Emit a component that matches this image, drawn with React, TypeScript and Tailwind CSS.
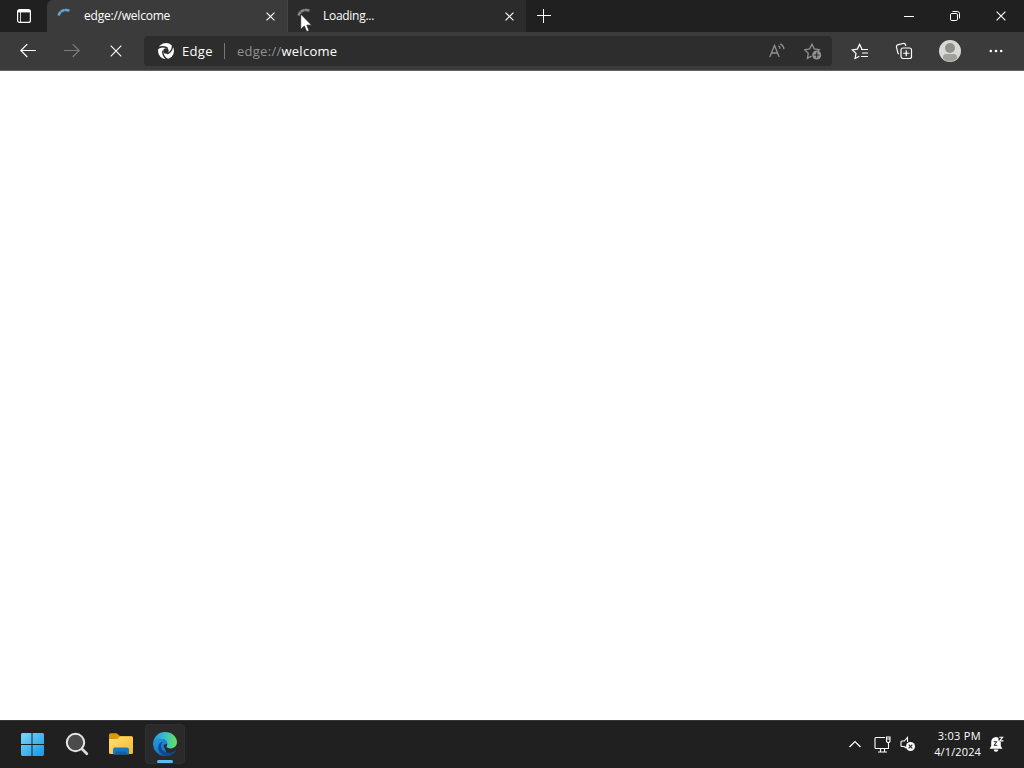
import type { ReactNode } from "react";
import clsx from "clsx";

function CloseIcon({ size = 9, width = 1.3 }: { size?: number; width?: number }) {
  return (
    <svg width={size} height={size} viewBox="0 0 10 10" fill="none" stroke="currentColor" strokeWidth={width}>
      <path d="M.6.6l8.8 8.8M9.4.6L.6 9.4" />
    </svg>
  );
}

function Spinner() {
  return (
    <svg width="16" height="16" viewBox="0 0 16 16" fill="none" stroke="currentColor" strokeWidth="2.6">
      <path d="M2.600 7.600C3.300 3.800 8 .4 13.700 2.700" strokeDasharray="4.200 .3" />
    </svg>
  );
}

function EdgeMark() {
  const cut = "M-.3 5.300C2.600 3.300 7.200 2.900 9.800 5.600";
  return (
    <svg width="16" height="16" viewBox="0 0 16 16">
      <circle cx="8" cy="8" r="8" fill="#fff" />
      <g fill="none" stroke="#2d2d2d" strokeWidth="1.400">
        <path d={cut} />
        <path d={cut} transform="rotate(120 8 8)" />
        <path d={cut} transform="rotate(240 8 8)" />
      </g>
      <circle cx="8" cy="8" r="2.700" fill="#2d2d2d" />
    </svg>
  );
}

function ToolButton({ label, className, children }: { label: string; className?: string; children: ReactNode }) {
  return (
    <button aria-label={label} className={clsx("flex h-8 shrink-0 items-center justify-center", className)}>
      {children}
    </button>
  );
}

function TabStrip() {
  return (
    <header className="flex h-8 shrink-0 bg-[#202020] text-white">
      <ToolButton label="Tab actions" className="w-[47px] pl-px">
        <svg width="16" height="16" viewBox="0 0 16 16" fill="none" stroke="currentColor" strokeWidth="1.200">
          <rect x="1.600" y="1.600" width="12.800" height="12.800" rx="2" />
          <path d="M2 3.200h12" strokeWidth="2.400" />
          <path d="M4.500 4v10" strokeWidth=".8" />
        </svg>
      </ToolButton>
      <div className="flex w-60 items-center rounded-tl-md bg-[#3b3b3b] pl-[9px] pr-3">
        <span className="text-[#62a9d4]">
          <Spinner />
        </span>
        <span className="ml-3 flex-1 text-xs leading-4 tracking-[-0.22px]">edge://welcome</span>
        <CloseIcon />
      </div>
      <div className="flex w-[239px] items-center border-l border-[#444] bg-[#2b2b2b] pl-2 pr-3">
        <span className="text-[#8a8a8a]">
          <Spinner />
        </span>
        <span className="ml-[11px] flex-1 text-xs leading-4 tracking-[-0.28px]">Loading...</span>
        <CloseIcon />
      </div>
      <ToolButton label="New tab" className="w-[35px]">
        <svg width="14" height="14" viewBox="0 0 14 14" fill="none" stroke="currentColor">
          <path d="M0 6.500h14M6.500 0v14" />
        </svg>
      </ToolButton>
      <div className="ml-auto flex">
        <ToolButton label="Minimize" className="w-[46px]">
          <svg width="10" height="10" viewBox="0 0 10 10" stroke="currentColor">
            <path d="M0 5.500h10" />
          </svg>
        </ToolButton>
        <ToolButton label="Restore" className="w-[46px]">
          <svg width="10" height="10" viewBox="0 0 10 10" fill="none" stroke="currentColor">
            <rect x=".5" y="2.500" width="7" height="7" rx="1.300" />
            <path d="M2.500.5h4.800a2.200 2.200 0 0 1 2.200 2.200v4.800" />
          </svg>
        </ToolButton>
        <ToolButton label="Close" className="w-[46px]">
          <CloseIcon size={10} width={1.1} />
        </ToolButton>
      </div>
    </header>
  );
}

function Toolbar() {
  return (
    <div className="flex h-[39px] shrink-0 items-center border-b border-[#626262] bg-[#3b3b3b] text-white">
      <div className="flex w-36 pl-[6px]">
        <ToolButton label="Back" className="w-11">
          <svg width="16" height="14" viewBox="0 0 16 14" fill="none" stroke="currentColor" strokeWidth="1.100">
            <path d="M16 6.500H.8M7.300 0L.8 6.500l6.500 6.500" />
          </svg>
        </ToolButton>
        <ToolButton label="Forward" className="w-11 text-[#7c7c7c]">
          <svg width="16" height="14" viewBox="0 0 16 14" fill="none" stroke="currentColor" strokeWidth="1.100">
            <path d="M0 6.500h15.200M8.700 0L15.200 6.500l-6.500 6.500" />
          </svg>
        </ToolButton>
        <ToolButton label="Stop" className="w-11">
          <CloseIcon size={12} width={0.9} />
        </ToolButton>
      </div>
      <div className="flex h-[30px] w-[688px] items-center rounded-sm bg-[#2d2d2d] pl-[14px] text-[13px] leading-5">
        <EdgeMark />
        <span className="ml-2 w-8 tracking-[0.3px]">Edge</span>
        <span className="ml-[10px] mr-3 h-4 w-px bg-[#777]" />
        <span className="tracking-[0.27px] text-[#929292]">
          edge://<span className="text-white">welcome</span>
        </span>
        <div className="ml-auto flex pr-px text-[#929292]">
          <ToolButton label="Read aloud" className="w-9">
            <svg width="16" height="16" viewBox="0 0 16 16" fill="none" stroke="currentColor" strokeWidth="1.300">
              <path d="M.8 14L5.500 2.500 10.200 14M2.500 10h6M9.300 2.800c1.200.7 1.800 1.700 1.800 3M11.200.8c2.400 1.200 3.600 3 3.700 5.400" />
            </svg>
          </ToolButton>
          <ToolButton label="Add to favorites" className="w-9 pr-px">
            <svg width="18" height="18" viewBox="0 0 18 18" fill="none" stroke="currentColor" strokeWidth="1.300">
              <path d="M7.500 14.100l-4.100 2.200.9-5-3.700-3.600 5-.7L8 2.300l2.300 4.700 5 .7-1.200 1.200" />
              <circle cx="12.700" cy="13" r="4.500" fill="currentColor" stroke="none" />
              <path d="M12.700 10.300v5.400M10 13h5.400" stroke="#2d2d2d" strokeWidth="1.100" />
            </svg>
          </ToolButton>
        </div>
      </div>
      <div className="flex pl-[5px]">
        <ToolButton label="Favorites" className="w-[46px]">
          <svg width="18" height="18" viewBox="0 0 18 18" fill="none" stroke="currentColor" strokeWidth="1.200">
            <path d="M8.300 14.300l-4.200 2.200.9-5.100L1.300 7.800l5-.7 2.300-4.700 2.300 4.700M10 7.500H17M11 11H17M10 14.500H17" />
          </svg>
        </ToolButton>
        <ToolButton label="Collections" className="w-11 pr-[2px]">
          <svg width="18" height="18" viewBox="0 0 18 18" fill="none" stroke="currentColor" strokeWidth="1.200">
            <rect x="6" y="6" width="10.500" height="10.500" rx="2" />
            <path d="M11.250 8.200v6.100M8.200 11.250h6.100M3.800 12.200L2.900 11 1.500 5.200C1.200 3.800 1.800 3 3.200 2.700l5-1.200c1.300-.3 2.100.3 2.400 1.600l.2.900" />
          </svg>
        </ToolButton>
        <ToolButton label="Profile" className="w-[46px]">
          <svg width="22" height="22" viewBox="0 0 22 22">
            <circle cx="11" cy="11" r="11" fill="#d8d8d5" />
            <circle cx="11" cy="8" r="5" fill="#8f8f8b" />
            <path d="M4 18.500v-1.700c0-1.600 1.300-2.800 2.900-2.800h8.200c1.600 0 2.900 1.200 2.900 2.800v1.700A10 10 0 0 1 11 21.500a10 10 0 0 1-7-3z" fill="#a0a09c" />
          </svg>
        </ToolButton>
        <ToolButton label="Settings and more" className="w-[46px]">
          <svg width="14" height="4" viewBox="0 0 14 4" fill="currentColor">
            <circle cx="1.800" cy="2" r="1.300" />
            <circle cx="7" cy="2" r="1.300" />
            <circle cx="12.200" cy="2" r="1.300" />
          </svg>
        </ToolButton>
      </div>
    </div>
  );
}

function WindowsLogo() {
  return (
    <svg width="24" height="24" viewBox="0 0 24 24">
      <defs>
        <linearGradient id="win" x1="0" y1="0" x2="24" y2="24" gradientUnits="userSpaceOnUse">
          <stop stopColor="#7ddcf8" />
          <stop offset="1" stopColor="#1597e8" />
        </linearGradient>
      </defs>
      <path d="M2 1H11.500v11H1V2zM12.500 1h10.500l1 1v10H12.500zM1 13h10.500v11H2l-1-1zM12.500 13H24v10l-1 1H12.500z" fill="url(#win)" />
    </svg>
  );
}

function SearchIcon() {
  return (
    <svg width="24" height="24" viewBox="0 0 24 24" fill="none">
      <path d="M17.300 17.300l4.500 4.500" stroke="#d9d9d9" strokeWidth="2.800" strokeLinecap="round" />
      <circle cx="10.500" cy="10.500" r="8.700" fill="#4b4b4b" stroke="#e6e6e6" strokeWidth="2" />
    </svg>
  );
}

function FolderIcon() {
  return (
    <svg width="26" height="24" viewBox="0 0 26 24">
      <defs>
        <linearGradient id="folder" x1="0" y1="0" x2="1" y2="1">
          <stop stopColor="#ffe07a" />
          <stop offset="1" stopColor="#f5b82b" />
        </linearGradient>
      </defs>
      <path d="M1 3a1.700 1.700 0 0 1 1.700-1.700h6L12 4h11.300A1.700 1.700 0 0 1 25 5.700V10H1z" fill="#dc9908" />
      <path d="M1 7h8.200L12 4.500h11.300A1.700 1.700 0 0 1 25 6.200v14.300a1.500 1.500 0 0 1-1.500 1.500h-21A1.500 1.500 0 0 1 1 20.500z" fill="url(#folder)" />
      <path d="M5 22.500V17.500A2 2 0 0 1 7 15.500h12a2 2 0 0 1 2 2v5z" fill="#1678c5" />
      <path d="M7.500 19.500h11V22.500h-11z" fill="#11609f" />
    </svg>
  );
}

function EdgeLogo() {
  return (
    <svg width="24" height="24" viewBox="0 0 24 24">
      <defs>
        <linearGradient id="edgeTop" x1="0" y1="8" x2="24" y2="8" gradientUnits="userSpaceOnUse">
          <stop stopColor="#2496dc" />
          <stop offset=".5" stopColor="#36c0cc" />
          <stop offset="1" stopColor="#6adf55" />
        </linearGradient>
        <linearGradient id="edgeLeft" x1="0" y1="8" x2="10" y2="24" gradientUnits="userSpaceOnUse">
          <stop stopColor="#229ae0" />
          <stop offset="1" stopColor="#116bc4" />
        </linearGradient>
      </defs>
      <path d="M.1 11C.7 4.900 5.700 0 12 0c7.200 0 12 5 12 10.300 0 3.600-2.900 6.100-6.300 6.100-2.700 0-4.300-1-4.300-1.900 0-.5.900-.9.900-2.600 0-2.800-2.600-5-5.900-5C4.500 6.900.9 8.300.1 11z" fill="url(#edgeTop)" />
      <path d="M.1 11C.9 8 4.300 6.500 7.900 6.700c3.600.2 6.200 2.200 6.400 5l-4 1.400L15 24c-1 .2-2 0-3 0A12 12 0 0 1 .1 11z" fill="url(#edgeLeft)" />
      <path d="M10.500 9.600c-2.300 1.200-3 3.800-2.200 6.500.8 2.800 3.400 4.600 6.500 4.700 2.800.1 5.300-.8 7.500-2.400.4-.3.700.1.500.5C20.800 22 17.500 24 14 24c-5.100 0-8.700-4.300-8.700-8.300 0-3.200 2-5.500 5.200-6.100z" fill="#114a8b" />
    </svg>
  );
}

function Taskbar() {
  return (
    <footer className="flex h-12 shrink-0 items-center border-t border-[#383838] bg-[#202020] pb-px text-white">
      <nav className="flex pl-[10px]">
        <ToolButton label="Start" className="w-11">
          <WindowsLogo />
        </ToolButton>
        <ToolButton label="Search" className="w-11 pl-[2px]">
          <SearchIcon />
        </ToolButton>
        <ToolButton label="File Explorer" className="w-11 pl-[2px]">
          <FolderIcon />
        </ToolButton>
        <div className="-my-1 ml-[3px] flex h-10 w-10 flex-col items-center rounded border border-[#303030] bg-[#2a2a2a] pt-[7px]">
          <EdgeLogo />
          <span className="mt-1 h-[3px] w-4 rounded-full bg-[#62b9ed]" />
        </div>
      </nav>
      <div className="ml-auto flex items-center">
        <ToolButton label="Show hidden icons" className="w-6">
          <svg width="12" height="8" viewBox="0 0 12 8" fill="none" stroke="currentColor" strokeWidth="1.200">
            <path d="M.5 7L6 1.500 11.500 7" />
          </svg>
        </ToolButton>
        <div className="ml-[7px] flex items-center gap-[9px]">
          <svg width="17" height="17" viewBox="0 0 17 17" fill="none" stroke="currentColor" strokeWidth="1.100">
            <path d="M11 1.500H2a1 1 0 0 0-1 1v9a1 1 0 0 0 1 1h12.500V7.500M4 16h9M6.500 12.500V16M10.500 12.500V16" />
            <path d="M12.500 1h3.500v4.500l-1 1h-1.500l-1-1zM12.500 3H16M14.500 6.500v2" />
          </svg>
          <svg width="16" height="16" viewBox="0 0 16 16" fill="none" stroke="currentColor" strokeWidth="1.100">
            <path d="M7.500 6V1.500L4.300 5H2a1 1 0 0 0-1 1v3.500a1 1 0 0 0 1 1h2.300L6 12" />
            <circle cx="10.500" cy="10.500" r="4.500" fill="currentColor" stroke="none" />
            <path d="M8.700 8.700l3.600 3.600M12.300 8.700l-3.600 3.600" stroke="#202020" />
          </svg>
        </div>
        <div className="ml-[17px] w-12 whitespace-nowrap text-right text-[11px] leading-4 tracking-[0.13px]">
          <div className="tracking-[0.32px]">3:03 PM</div>
          <div>4/1/2024</div>
        </div>
        <div className="ml-2 mr-5">
          <svg width="15" height="16" viewBox="0 0 15 16">
            <path d="M7 1A4.900 4.900 0 0 0 2.200 6v4L.6 12.700h12.800L11.800 10V6A4.900 4.900 0 0 0 7 1zM4.700 13.500a2.300 2.300 0 0 0 4.600 0z" fill="#fff" />
            <path d="M4.800 5.700h3L5 9.300h3.300" fill="none" stroke="#202020" />
            <path d="M9.500 0H15v6h-3.800L9.500 4.500z" fill="#202020" />
            <path d="M10.300 1.200h3.400l-3 3.700h3.700" fill="none" stroke="#fff" strokeWidth="1.100" />
          </svg>
        </div>
      </div>
    </footer>
  );
}

export default function App() {
  return (
    <div className="relative flex h-screen w-screen cursor-default flex-col overflow-hidden bg-white font-['Open_Sans','Noto_Sans',sans-serif]">
      <TabStrip />
      <Toolbar />
      <main className="flex-1 bg-white" />
      <Taskbar />
      {/* Mouse pointer */}
      <svg className="absolute left-[300px] top-[13px]" width="13" height="20" viewBox="0 0 13 20">
        <path d="M.7 1v15.500l3.600-3.400 2.400 5.600 2.500-1.100-2.400-5.400h4.900z" fill="#fff" stroke="#222" strokeWidth=".8" />
      </svg>
    </div>
  );
}
